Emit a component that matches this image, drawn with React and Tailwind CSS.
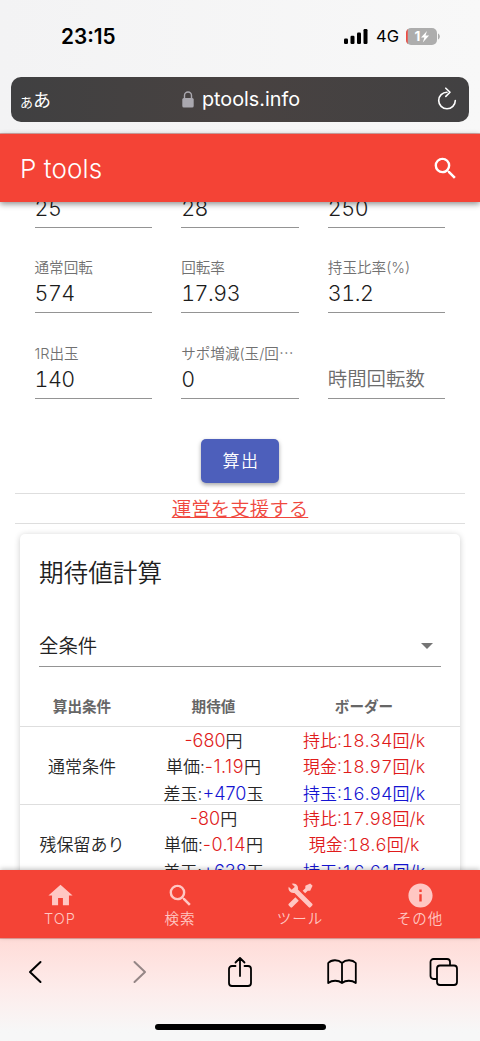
const FIELDS = [
  { value: "25" },
  { value: "28" },
  { value: "250" },
  { label: "通常回転", value: "574" },
  { label: "回転率", value: "17.93" },
  { label: "持玉比率(%)", value: "31.2" },
  { label: "1R出玉", value: "140" },
  { label: "サポ増減(玉/回⋯", value: "0" },
  { placeholder: "時間回転数" },
];

const ROWS = [
  {
    name: "通常条件",
    yen: "-680",
    unit: "-1.19",
    balls: "+470",
    ratio: "18.34",
    cash: "18.97",
    held: "16.94",
  },
  {
    name: "残保留あり",
    yen: "-80",
    unit: "-0.14",
    balls: "+638",
    ratio: "17.98",
    cash: "18.6",
    held: "16.61",
  },
];

const SEARCH =
  "M15.5 14h-.79l-.28-.27A6.47 6.47 0 0 0 16 9.5 6.5 6.5 0 1 0 9.5 16c1.61 0 3.09-.59 4.23-1.57l.27.28v.79l5 4.99L20.49 19l-4.99-5zm-6 0C7.01 14 5 11.99 5 9.5S7.01 5 9.5 5 14 7.01 14 9.5 11.99 14 9.5 14z";

const TABS = [
  { label: "TOP", path: "M10 20v-6h4v6h5v-8h3L12 3 2 12h3v8z" },
  { label: "検索", path: SEARCH },
  {
    label: "ツール",
    path: "M21.71 20.29 20.29 21.71A1 1 0 0 1 18.88 21.71L7 9.85A3.81 3.81 0 0 1 6 10 4 4 0 0 1 2.22 4.7L4.76 7.24 5.29 6.71 6.71 5.29 7.24 4.76 4.7 2.22A4 4 0 0 1 10 6 3.81 3.81 0 0 1 9.85 7L21.71 18.88A1 1 0 0 1 21.71 20.29M2.29 18.88A1 1 0 0 0 2.29 20.29L3.71 21.71A1 1 0 0 0 5.12 21.71L10.59 16.25 7.76 13.42M20 2 16 4V6L13.83 8.17 15.83 10.17 18 8H20L22 4Z",
  },
  {
    label: "その他",
    path: "M12 2C6.48 2 2 6.48 2 12s4.48 10 10 10 10-4.48 10-10S17.52 2 12 2zm1 15h-2v-6h2v6zm0-8h-2V7h2v2z",
  },
];

function Icon({ path, className }) {
  return (
    <svg viewBox="0 0 24 24" fill="currentColor" className={className}>
      <path d={path} />
    </svg>
  );
}

function StatusBar() {
  return (
    <div className="flex h-[77px] items-start justify-between pt-[22px] pr-[40px] pl-[61px]">
      <span className="pt-px text-[20.8px] leading-[28px] font-semibold text-black">23:15</span>
      <div className="flex h-[28px] items-center">
        <svg width="24" height="15" viewBox="0 0 24 15" className="mr-[8px]">
          <rect x="0" y="9.5" width="4" height="5.5" rx="1.2" />
          <rect x="6.5" y="6.8" width="4" height="8.2" rx="1.2" />
          <rect x="13" y="3.5" width="4" height="11.5" rx="1.2" />
          <rect x="19.5" y="0" width="4" height="15" rx="1.2" />
        </svg>
        <span className="mr-[7px] text-[16.5px] text-black">4G</span>
        <svg width="34" height="17" viewBox="0 0 34 17">
          <clipPath id="battery">
            <rect width="31" height="17" rx="5" />
          </clipPath>
          <g clipPath="url(#battery)">
            <rect width="31" height="17" fill="#adadad" />
            <rect width="1.7" height="17" fill="#ee4b42" />
          </g>
          <path d="M32 5.5c2.4 1 2.4 5 0 6z" fill="#adadad" />
          <text x="8.6" y="13.4" fill="#fff" fontSize="13.5" fontWeight="700">1</text>
          <path d="M21 3 15 9.5h3.4l-1.6 4.9 6.3-6.9h-3.6z" fill="#fff" />
        </svg>
      </div>
    </div>
  );
}

function AddressBar() {
  return (
    <div className="mx-[11px] flex h-[45px] items-center justify-between rounded-[10px] bg-linear-to-r from-[#404041] via-[#484241] to-[#424142] pr-[11px] pl-[9px] text-white">
      <span className="w-[40px] pt-[2px] whitespace-nowrap">
        <span className="text-[13px]">あ</span>
        <span className="text-[18px]">あ</span>
      </span>
      <div className="flex items-center gap-[8px]">
        <svg width="12" height="17" viewBox="0 0 12 17">
          <path d="M2.5 8V4.5a3.5 3.5 0 0 1 7 0V8" fill="none" stroke="#aaa8af" strokeWidth="1.4" />
          <rect x="0.3" y="7" width="11.4" height="9.5" rx="1.5" fill="#aaa8af" />
        </svg>
        <span className="pt-px text-[19.8px]">ptools.info</span>
      </div>
      <div className="flex w-[36px] justify-end">
        <svg width="22" height="24" viewBox="0 0 22 24" fill="none" stroke="#fff" strokeWidth="1.6" strokeLinecap="round" strokeLinejoin="round" className="-mt-[2px]">
          <path d="M11 5.2A8.3 8.3 0 1 0 19.3 13.5" />
          <path d="M9.8 1.2 14 5.3 9.8 9.4" />
        </svg>
      </div>
    </div>
  );
}

function Field({ label, value, placeholder }) {
  return (
    <div className="flex h-[85.5px] flex-col justify-end border-b-[1.5px] border-[#949494] pb-[5px] font-[350] whitespace-nowrap">
      <span className="text-[14.6px] leading-[20px] text-[#707070]">{label}</span>
      {placeholder ? (
        <span className="text-[19.4px] leading-[28px] text-[#6c6c6c]">{placeholder}</span>
      ) : (
        <span className="pt-px text-[21.5px] leading-[28px] tracking-[-0.5px] text-[#1c1c1c] tabular-nums">{value}</span>
      )}
    </div>
  );
}

function Border({ name, rate, className }) {
  return (
    <div className={className}>
      {name}
      <span className="text-[17.8px]">:{rate}</span>回<span className="text-[17.8px]">/k</span>
    </div>
  );
}

function ResultRow({ row }) {
  return (
    <div className="grid h-[78px] grid-cols-[124px_139px_162px] items-center border-t border-[#dedede] pt-px text-center text-[17px] leading-[25.7px] font-[350] whitespace-nowrap text-[#262626]">
      <div>{row.name}</div>
      <div>
        <div><span className="text-[18px] text-[#e01b1b]">{row.yen}</span>円</div>
        <div>単価:<span className="text-[18px] tracking-[0.5px] text-[#e01b1b]">{row.unit}</span>円</div>
        <div>差玉:<span className="text-[18px] text-[#1414d2]">{row.balls}</span>玉</div>
      </div>
      <div className="text-[#e01b1b] tabular-nums">
        <Border name="持比" rate={row.ratio} />
        <Border name="現金" rate={row.cash} />
        <Border name="持玉" rate={row.held} className="text-[#1414d2]" />
      </div>
    </div>
  );
}

function ResultCard() {
  return (
    <section className="mx-[20px] mt-[10px] h-[400px] rounded-[5px] bg-white pt-[21px] shadow-[0_1px_6px_rgba(0,0,0,0.2)]">
      <h2 className="px-[19px] text-[24.6px] leading-[36px] font-[350] text-[#212121]">期待値計算</h2>
      <div className="mx-[19px] mt-[35px] flex h-[41px] items-center justify-between border-b-[1.5px] border-[#949494] pr-[8px] text-[19.4px] font-[350] text-[#222]">
        <span className="pt-[3px]">全条件</span>
        <svg width="12" height="6" viewBox="0 0 12 6" fill="#757575">
          <path d="M0 0h12L6 6z" />
        </svg>
      </div>
      <div className="grid h-[59px] grid-cols-[124px_139px_162px] items-center pt-[24px] text-center text-[14.6px] font-bold text-[#666]">
        <span>算出条件</span>
        <span>期待値</span>
        <span>ボーダー</span>
      </div>
      {ROWS.map((row) => (
        <ResultRow key={row.name} row={row} />
      ))}
    </section>
  );
}

function SafariToolbar() {
  return (
    <div className="h-[103px] border-t border-[#e8a39e] bg-linear-to-b from-[#ffdcd8] via-[#fdeceb] via-50% to-[#f7f7f7] to-90%">
      <div className="flex h-[66px] items-center pl-[28px] text-black">
        <svg width="14" height="24" viewBox="0 0 14 24" fill="none" stroke="currentColor" strokeWidth="2" strokeLinecap="round" strokeLinejoin="round">
          <path d="M12.5 2 2 12l10.5 10" />
        </svg>
        <svg width="14" height="24" viewBox="0 0 14 24" fill="none" stroke="#958686" strokeWidth="2" strokeLinecap="round" strokeLinejoin="round" className="ml-[91px]">
          <path d="M1.5 2 12 12 1.5 22" />
        </svg>
        <svg width="26" height="32" viewBox="0 0 26 32" fill="none" stroke="currentColor" strokeWidth="1.8" strokeLinecap="round" strokeLinejoin="round" className="ml-[80px]">
          <path d="M8.5 10H5a3 3 0 0 0-3 3v14a3 3 0 0 0 3 3h16a3 3 0 0 0 3-3V13a3 3 0 0 0-3-3h-3.5M13 20V2.500M8.500 6.500 13 2l4.500 4.500" />
        </svg>
        <svg width="30" height="26" viewBox="0 0 30 26" fill="none" stroke="currentColor" strokeWidth="1.8" strokeLinejoin="round" strokeLinecap="round" className="ml-[74px]">
          <path d="M15 4C11 .2 4.5.5 1.2 4v20c4-3 10-3 13.8 0 3.8-3 9.8-3 13.8 0V4C25.5.5 19 .2 15 4zM15 4v20" />
        </svg>
        <svg width="29" height="28" viewBox="0 0 29 28" fill="none" stroke="currentColor" strokeWidth="1.8" strokeLinejoin="round" className="ml-[72px]">
          <rect x="8" y="7.5" width="20" height="19.5" rx="3" />
          <path d="M8 21H4.5a3 3 0 0 1-3-3V4a3 3 0 0 1 3-3H18a3 3 0 0 1 3 3v3.5" />
        </svg>
      </div>
      <div className="mx-auto mt-[19px] h-[6px] w-[171px] rounded-full bg-black" />
    </div>
  );
}

export default function App() {
  return (
    <div className="flex h-[1041px] w-[480px] flex-col overflow-hidden bg-white font-['Inter','Noto_Sans_CJK_JP',sans-serif]">
      <div className="h-[134px] shrink-0 border-b border-[#d7a9a7] bg-linear-to-r from-[#f3f3f4] to-[#f8f8f8]">
        <StatusBar />
        <AddressBar />
      </div>

      <header className="relative z-10 flex h-[68px] shrink-0 items-center justify-between bg-[#f44336] pr-[20px] pl-[20px] text-white shadow-[0_2px_6px_rgba(0,0,0,0.45)]">
        <h1 className="text-[26px] font-light tracking-[0.1px]">P tools</h1>
        <Icon path={SEARCH} className="size-[29px]" />
      </header>

      <main className="min-h-0 flex-1 overflow-hidden">
        <div className="-mt-[60px] grid grid-cols-3 gap-x-[29px] px-[34.5px]">
          {FIELDS.map((field, i) => (
            <Field key={i} {...field} />
          ))}
        </div>
        <button className="mx-auto mt-[40px] block h-[44px] w-[78px] rounded-[5px] bg-[#4d5fbb] pt-[2px] pl-[2px] text-[17px] font-[350] tracking-[1.5px] text-white shadow-[0_2px_4px_rgba(0,0,0,0.35)]">
          算出
        </button>
        <div className="mx-[15px] mt-[10px] h-[31px] border-y border-[#dedede] text-center">
          <a className="text-[19.5px] leading-[31px] font-[350] text-[#f0483e] underline">運営を支援する</a>
        </div>
        <ResultCard />
      </main>

      <nav className="relative z-10 grid h-[68px] shrink-0 grid-cols-4 bg-[#f44336] text-[#ffc7c3] shadow-[0_-1px_5px_rgba(0,0,0,0.25)]">
        {TABS.map((tab) => (
          <div key={tab.label} className="flex flex-col items-center pt-[11px]">
            <Icon path={tab.path} className="size-[29px]" />
            <span className="text-[14.5px] leading-[17px] font-[350] tracking-[1px]">{tab.label}</span>
          </div>
        ))}
      </nav>

      <SafariToolbar />
    </div>
  );
}
